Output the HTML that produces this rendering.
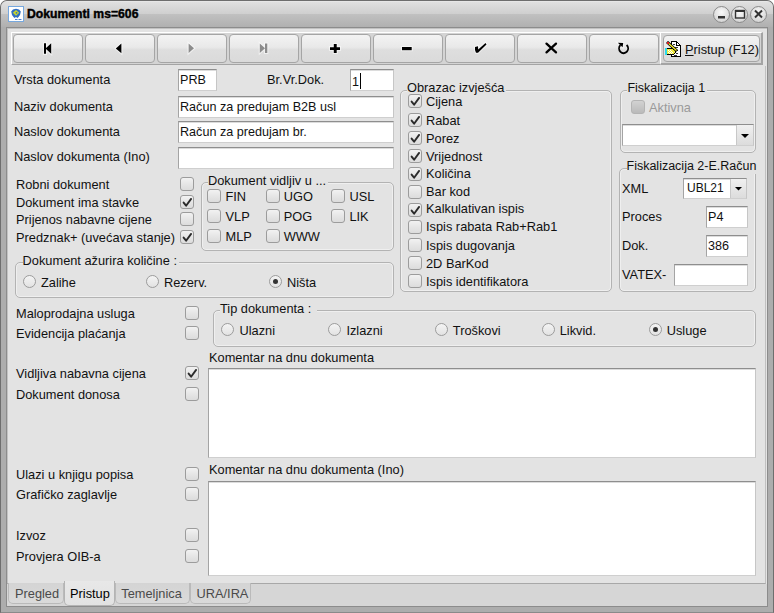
<!DOCTYPE html>
<html><head><meta charset="utf-8"><style>
*{box-sizing:border-box;margin:0;padding:0}
html,body{width:774px;height:613px;overflow:hidden;background:#fff}
body{position:relative;font-family:"Liberation Sans",sans-serif;font-size:12.8px;color:#111}
.win{position:absolute;left:0;top:0;width:774px;height:613px;background:#adadad;border-radius:7px 7px 0 0;border:1px solid #6e6e6e;border-bottom-color:#8a8a8a}
.tbar{position:absolute;left:1px;top:1px;width:772px;height:26px;border-radius:6px 6px 0 0;background:linear-gradient(#eeeeee 0px,#e0e0e0 1px,#cfcfcf 13px,#c1c1c1 13px,#b0b0b0 26px)}
.client{position:absolute;left:6px;top:27px;width:762px;height:580px;background:#e3e3e3;border:1px solid #8c8c8c;box-shadow:inset 1px 1px 0 #c2c2c2}
.t{position:absolute;white-space:nowrap;line-height:15px;font-size:12.8px}
.gt{background:#e3e3e3}
.cb{position:absolute;width:14px;height:14px;border:1px solid #9c9c9c;border-radius:3px;background:linear-gradient(#f2f2f2,#e6e6e6 50%,#dcdcdc)}
.cb svg{position:absolute;left:-1px;top:-1px}
.cb.dis{background:linear-gradient(#d2d2d2,#bababa);border-color:#b4b4b4}
.rb{position:absolute;width:13px;height:13px;border:1px solid #9c9c9c;border-radius:50%;background:linear-gradient(#f4f4f4,#e2e2e2)}
.rb .dot{position:absolute;left:3px;top:3px;width:5px;height:5px;border-radius:50%;background:#333}
.inp{position:absolute;background:#fff;border:1px solid #c6c6c6;border-top-color:#8e8e8e;border-left-color:#a4a4a4;border-bottom-color:#cfcfcf;box-shadow:inset 0 1px 0 #dcdcdc}
.it{position:absolute;white-space:nowrap;line-height:15px;font-size:12.6px}
.grp{position:absolute;border:1px solid #b3b3b3;border-radius:5px;box-shadow:inset 0 0 0 1px #efefef}
.btn{position:absolute;top:34px;height:29px;border:1px solid #a5a5a5;border-radius:4px;background:linear-gradient(#f3f3f3,#e9e9e9 45%,#dedede 55%,#dadada)}
.btn svg{position:absolute;left:0;top:0}
</style></head><body>
<div class="win"></div><div class="tbar"></div><svg style="position:absolute;left:8px;top:6px" width="16" height="16"><rect x="0.5" y="0.5" width="15" height="15" fill="#fff" stroke="#77a8de"/><path d="M5 3.5 L8 2.8 L11 3.5 L12.8 5.5 L12 9 L10.5 11 L9.5 12 L8 11 L6.5 12 L5.5 11 L4 9 L3.2 5.5Z" fill="#2f6ec4"/><path d="M8 4 L11.2 6.8 L8 9.8 L4.8 6.8Z" fill="#c8d62c"/><circle cx="8.5" cy="6.8" r="0.9" fill="#2f6ec4"/><path d="M7 13.5 H9.5 M10.5 13.5 H13.5" stroke="#4a7fd0" stroke-width="1"/></svg><div class="t" style="left:27px;top:7px;font-weight:bold;font-size:12.2px;-webkit-text-stroke:0.4px #000;color:#000">Dokumenti ms=606</div><div style="position:absolute;left:712.5px;top:5.5px;width:17px;height:17px;border-radius:50%;border:1px solid #8a8a8a;background:radial-gradient(circle at 50% 35%,#fafafa,#d8d8d8 70%,#c8c8c8)"></div><div style="position:absolute;left:731.0px;top:5.5px;width:17px;height:17px;border-radius:50%;border:1px solid #8a8a8a;background:radial-gradient(circle at 50% 35%,#fafafa,#d8d8d8 70%,#c8c8c8)"></div><div style="position:absolute;left:750.0px;top:5.5px;width:17px;height:17px;border-radius:50%;border:1px solid #8a8a8a;background:radial-gradient(circle at 50% 35%,#fafafa,#d8d8d8 70%,#c8c8c8)"></div><svg style="position:absolute;left:0;top:0" width="774" height="30"><rect x="718" y="16" width="7" height="2.5" fill="#333"/><rect x="735.5" y="10.5" width="9" height="7.5" fill="none" stroke="#333" stroke-width="1.4"/><rect x="735" y="10" width="10" height="2" fill="#333"/><path d="M755 10.5 L762 17.5 M762 10.5 L755 17.5" stroke="#333" stroke-width="2"/></svg><div class="client"></div><div style="position:absolute;left:11px;top:32px;width:649px;height:33px;background:#d4d4d4;border-top:1px solid #fff;border-left:1px solid #fff;border-bottom:1px solid #a4a4a4"></div><div style="position:absolute;left:660px;top:32px;width:103px;height:33px;background:#d4d4d4;border-top:1px solid #fff;border-left:1px solid #fff;border-right:2px solid #a4a4a4;border-bottom:2px solid #a4a4a4"></div><div class="btn" style="left:13px;width:70px"><svg width="70" height="29" style="left:-1px;top:-1px"><g fill="#fff" stroke="#fff" stroke-width="2.2" opacity="0.55"><path d="M31 9.2 H33 V19.8 H31Z M32.5 14.5 L38.2 9.2 V19.8Z"/></g><g><path d="M31 9.2 H33 V19.8 H31Z M32.5 14.5 L38.2 9.2 V19.8Z"/></g></svg></div><div class="btn" style="left:85px;width:70px"><svg width="70" height="29" style="left:-1px;top:-1px"><g fill="#fff" stroke="#fff" stroke-width="2.2" opacity="0.55"><path d="M30.8 14.4 L36.4 9.6 V19.2Z"/></g><g><path d="M30.8 14.4 L36.4 9.6 V19.2Z"/></g></svg></div><div class="btn" style="left:157px;width:70px"><svg width="70" height="29" style="left:-1px;top:-1px"><g fill="#fff" stroke="#fff" stroke-width="2.2" opacity="0.55"><path d="M31.6 9.5 L37 14.3 L31.6 19Z" fill="#fff"/></g><g><path d="M31.6 9.5 L37 14.3 L31.6 19Z" fill="#8c8c8c"/></g></svg></div><div class="btn" style="left:229px;width:70px"><svg width="70" height="29" style="left:-1px;top:-1px"><g fill="#fff" stroke="#fff" stroke-width="2.2" opacity="0.55"><path d="M30.8 9.5 L36 14.3 L30.8 19Z M36 9.5 H38.3 V19 H36Z" fill="#fff"/></g><g><path d="M30.8 9.5 L36 14.3 L30.8 19Z M36 9.5 H38.3 V19 H36Z" fill="#8c8c8c"/></g></svg></div><div class="btn" style="left:301px;width:70px"><svg width="70" height="29" style="left:-1px;top:-1px"><g fill="#fff" stroke="#fff" stroke-width="2.2" opacity="0.55"><path d="M29 13.2 H39 V16 H29Z M32.8 10 H35.7 V19 H32.8Z"/></g><g><path d="M29 13.2 H39 V16 H29Z M32.8 10 H35.7 V19 H32.8Z"/></g></svg></div><div class="btn" style="left:373px;width:70px"><svg width="70" height="29" style="left:-1px;top:-1px"><g fill="#fff" stroke="#fff" stroke-width="2.2" opacity="0.55"><path d="M29 13 H38.7 V16.2 H29Z"/></g><g><path d="M29 13 H38.7 V16.2 H29Z"/></g></svg></div><div class="btn" style="left:445px;width:70px"><svg width="70" height="29" style="left:-1px;top:-1px"><g fill="#fff" stroke="#fff" stroke-width="2.2" opacity="0.55"><path d="M30 13 L33 12.2 L33.2 15.5 L40.5 9 L41.5 10.5 L33 18.7 L31 18.7 L30 16Z"/></g><g><path d="M30 13 L33 12.2 L33.2 15.5 L40.5 9 L41.5 10.5 L33 18.7 L31 18.7 L30 16Z"/></g></svg></div><div class="btn" style="left:517px;width:70px"><svg width="70" height="29" style="left:-1px;top:-1px"><g fill="#fff" stroke="#fff" stroke-width="2.2" opacity="0.55"><path d="M29.5 9.6 L39 18.4 M39 9.6 L29.5 18.4" fill="none" stroke="#fff" stroke-width="2.3" stroke-linecap="round"/></g><g><path d="M29.5 9.6 L39 18.4 M39 9.6 L29.5 18.4" fill="none" stroke="#000" stroke-width="2.3" stroke-linecap="round"/></g></svg></div><div class="btn" style="left:589px;width:70px"><svg width="70" height="29" style="left:-1px;top:-1px"><g fill="#fff" stroke="#fff" stroke-width="2.2" opacity="0.55"><path d="M31.4 11.2 A4.5 4.7 0 1 0 37.6 11.0" fill="none" stroke="#fff" stroke-width="1.9"/><path d="M28.8 8.8 L34.2 9.0 L33.6 13.2Z"/></g><g><path d="M31.4 11.2 A4.5 4.7 0 1 0 37.6 11.0" fill="none" stroke="#000" stroke-width="1.9"/><path d="M28.8 8.8 L34.2 9.0 L33.6 13.2Z"/></g></svg></div><div class="btn" style="left:663px;width:97px;top:35px;height:27px"></div><svg style="position:absolute;left:665px;top:41px" width="17" height="17" shape-rendering="crispEdges"><path d="M6.5 0.5 H11.5 L15.5 4.5 V15.5 H6.5Z" fill="#fff" stroke="#000"/><path d="M11.5 0.5 V4.5 H15.5" fill="none" stroke="#000"/><path d="M8 3h2M9 6h4M10 9h3M8 12h2M11 12h2M9 14h3" stroke="#333"/><path d="M1.5 7.5 H7.5 L10.5 9.5 V11.5 L8.5 13.5 H1.5Z" fill="#f0ea3a" stroke="#000"/><path d="M3 9h1M5 9h1M4 10h1M6 10h1M3 11h1M5 11h1M7 11h1M4 12h1M6 12h1" stroke="#fff"/><rect x="0" y="7" width="2" height="7" fill="#29d8ee"/><path d="M2 1 L12 10" stroke="#000" stroke-width="3" shape-rendering="auto"/><path d="M2.5 1.5 L11.5 9.5" stroke="#f4ec20" stroke-width="1.4" shape-rendering="auto"/><rect x="2" y="1" width="2" height="2" fill="#e02020"/></svg><div class="t" style="left:685px;top:42px;"><u>P</u>ristup (F12)</div><div class="t" style="left:14px;top:72px;">Vrsta dokumenta</div><div class="t" style="left:14px;top:99px;">Naziv dokumenta</div><div class="t" style="left:14px;top:124px;">Naslov dokumenta</div><div class="t" style="left:14px;top:149px;">Naslov dokumenta (Ino)</div><div class="t" style="left:267px;top:72px;">Br.Vr.Dok.</div><div class="inp" style="left:178px;top:69px;width:39px;height:22px"><span class="it" style="left:1px;top:3.299999999999997px">PRB</span></div><div class="inp" style="left:350px;top:69px;width:44px;height:22px"><span class="it" style="left:1px;top:3.299999999999997px">1<span style="display:inline-block;width:1px;height:16px;background:#000;vertical-align:-3px;margin-left:1px"></span></span></div><div class="inp" style="left:178px;top:96px;width:216px;height:22px"><span class="it" style="left:1px;top:3.200000000000003px">Račun za predujam B2B usl</span></div><div class="inp" style="left:178px;top:121px;width:216px;height:22px"><span class="it" style="left:1px;top:2.6999999999999886px">Račun za predujam br.</span></div><div class="inp" style="left:178px;top:147px;width:216px;height:22px"></div><div class="t" style="left:16px;top:177px;">Robni dokument</div><div class="cb" style="left:180px;top:177px"></div><div class="t" style="left:16px;top:195px;">Dokument ima stavke</div><div class="cb" style="left:180px;top:195px"><svg width="14" height="14" viewBox="0 0 14 14"><path d="M3.6 7.6 L6.1 10.7 L11.1 3.9" fill="none" stroke="#2b2b2b" stroke-width="1.9" stroke-linecap="round" stroke-linejoin="round"/></svg></div><div class="t" style="left:16px;top:212px;">Prijenos nabavne cijene</div><div class="cb" style="left:180px;top:212px"></div><div class="t" style="left:16px;top:230px;">Predznak+ (uvećava stanje)</div><div class="cb" style="left:180px;top:230px"><svg width="14" height="14" viewBox="0 0 14 14"><path d="M3.6 7.6 L6.1 10.7 L11.1 3.9" fill="none" stroke="#2b2b2b" stroke-width="1.9" stroke-linecap="round" stroke-linejoin="round"/></svg></div><div class="grp" style="left:201px;top:182px;width:193px;height:69px"></div><div class="t gt" style="left:208px;top:173px;padding:0 2px 0 0">Dokument vidljiv u ...</div><div class="cb" style="left:207px;top:189px"></div><div class="t" style="left:225.5px;top:189px;">FIN</div><div class="cb" style="left:266px;top:189px"></div><div class="t" style="left:283.7px;top:189px;">UGO</div><div class="cb" style="left:331px;top:189px"></div><div class="t" style="left:349.4px;top:189px;">USL</div><div class="cb" style="left:207px;top:209px"></div><div class="t" style="left:225.5px;top:209px;">VLP</div><div class="cb" style="left:266px;top:209px"></div><div class="t" style="left:283.7px;top:209px;">POG</div><div class="cb" style="left:331px;top:209px"></div><div class="t" style="left:349.4px;top:209px;">LIK</div><div class="cb" style="left:207px;top:229px"></div><div class="t" style="left:225.5px;top:229px;">MLP</div><div class="cb" style="left:266px;top:229px"></div><div class="t" style="left:283.7px;top:229px;">WWW</div><div class="grp" style="left:15px;top:262px;width:379px;height:36px"></div><div class="t gt" style="left:22.6px;top:253px;padding:0 2px 0 0">Dokument ažurira količine :</div><div class="rb" style="left:23px;top:275px"></div><div class="t" style="left:41px;top:275px;">Zalihe</div><div class="rb" style="left:146px;top:275px"></div><div class="t" style="left:164px;top:275px;">Rezerv.</div><div class="rb" style="left:269px;top:275px"><div class="dot"></div></div><div class="t" style="left:287px;top:275px;">Ništa</div><div class="t" style="left:16px;top:306px;">Maloprodajna usluga</div><div class="cb" style="left:185px;top:306px"></div><div class="t" style="left:16px;top:326px;">Evidencija plaćanja</div><div class="cb" style="left:185px;top:326px"></div><div class="t" style="left:16px;top:366px;">Vidljiva nabavna cijena</div><div class="cb" style="left:185px;top:366px"><svg width="14" height="14" viewBox="0 0 14 14"><path d="M3.6 7.6 L6.1 10.7 L11.1 3.9" fill="none" stroke="#2b2b2b" stroke-width="1.9" stroke-linecap="round" stroke-linejoin="round"/></svg></div><div class="t" style="left:16px;top:387px;">Dokument donosa</div><div class="cb" style="left:185px;top:387px"></div><div class="t" style="left:16px;top:467px;">Ulazi u knjigu popisa</div><div class="cb" style="left:185px;top:467px"></div><div class="t" style="left:16px;top:487px;">Grafičko zaglavlje</div><div class="cb" style="left:185px;top:487px"></div><div class="t" style="left:16px;top:528px;">Izvoz</div><div class="cb" style="left:185px;top:528px"></div><div class="t" style="left:16px;top:549px;">Provjera OIB-a</div><div class="cb" style="left:185px;top:549px"></div><div class="grp" style="left:213px;top:310px;width:543px;height:37px"></div><div class="t gt" style="left:220px;top:301px;padding:0 2px 0 0">Tip dokumenta :&nbsp;</div><div class="rb" style="left:221px;top:323px"></div><div class="t" style="left:239.5px;top:323px;">Ulazni</div><div class="rb" style="left:328px;top:323px"></div><div class="t" style="left:346.4px;top:323px;">Izlazni</div><div class="rb" style="left:435px;top:323px"></div><div class="t" style="left:452.8px;top:323px;">Troškovi</div><div class="rb" style="left:542px;top:323px"></div><div class="t" style="left:559.7px;top:323px;">Likvid.</div><div class="rb" style="left:649px;top:323px"><div class="dot"></div></div><div class="t" style="left:666.7px;top:323px;">Usluge</div><div class="t" style="left:209px;top:350px;">Komentar na dnu dokumenta</div><div class="inp" style="left:208px;top:368px;width:548px;height:90px"></div><div class="t" style="left:209px;top:462px;">Komentar na dnu dokumenta (Ino)</div><div class="inp" style="left:208px;top:481px;width:548px;height:95px"></div><div class="grp" style="left:400px;top:90px;width:212px;height:202px"></div><div class="t gt" style="left:407px;top:80px;padding:0 2px 0 0">Obrazac izvješća</div><div class="cb" style="left:408px;top:94px"><svg width="14" height="14" viewBox="0 0 14 14"><path d="M3.6 7.6 L6.1 10.7 L11.1 3.9" fill="none" stroke="#2b2b2b" stroke-width="1.9" stroke-linecap="round" stroke-linejoin="round"/></svg></div><div class="t" style="left:426px;top:94px;">Cijena</div><div class="cb" style="left:408px;top:113px"><svg width="14" height="14" viewBox="0 0 14 14"><path d="M3.6 7.6 L6.1 10.7 L11.1 3.9" fill="none" stroke="#2b2b2b" stroke-width="1.9" stroke-linecap="round" stroke-linejoin="round"/></svg></div><div class="t" style="left:426px;top:113px;">Rabat</div><div class="cb" style="left:408px;top:131px"><svg width="14" height="14" viewBox="0 0 14 14"><path d="M3.6 7.6 L6.1 10.7 L11.1 3.9" fill="none" stroke="#2b2b2b" stroke-width="1.9" stroke-linecap="round" stroke-linejoin="round"/></svg></div><div class="t" style="left:426px;top:131px;">Porez</div><div class="cb" style="left:408px;top:149px"><svg width="14" height="14" viewBox="0 0 14 14"><path d="M3.6 7.6 L6.1 10.7 L11.1 3.9" fill="none" stroke="#2b2b2b" stroke-width="1.9" stroke-linecap="round" stroke-linejoin="round"/></svg></div><div class="t" style="left:426px;top:149px;">Vrijednost</div><div class="cb" style="left:408px;top:167px"><svg width="14" height="14" viewBox="0 0 14 14"><path d="M3.6 7.6 L6.1 10.7 L11.1 3.9" fill="none" stroke="#2b2b2b" stroke-width="1.9" stroke-linecap="round" stroke-linejoin="round"/></svg></div><div class="t" style="left:426px;top:166px;">Količina</div><div class="cb" style="left:408px;top:185px"></div><div class="t" style="left:426px;top:184px;">Bar kod</div><div class="cb" style="left:408px;top:203px"><svg width="14" height="14" viewBox="0 0 14 14"><path d="M3.6 7.6 L6.1 10.7 L11.1 3.9" fill="none" stroke="#2b2b2b" stroke-width="1.9" stroke-linecap="round" stroke-linejoin="round"/></svg></div><div class="t" style="left:426px;top:201px;">Kalkulativan ispis</div><div class="cb" style="left:408px;top:220px"></div><div class="t" style="left:426px;top:219px;">Ispis rabata Rab+Rab1</div><div class="cb" style="left:408px;top:238px"></div><div class="t" style="left:426px;top:238px;">Ispis dugovanja</div><div class="cb" style="left:408px;top:256px"></div><div class="t" style="left:426px;top:256px;">2D BarKod</div><div class="cb" style="left:408px;top:274px"></div><div class="t" style="left:426px;top:274px;">Ispis identifikatora</div><div class="grp" style="left:620px;top:90px;width:136px;height:63px"></div><div class="t gt" style="left:627.4px;top:80px;padding:0 2px 0 0"><span style="font-size:12.5px">Fiskalizacija 1</span></div><div class="cb dis" style="left:631px;top:100px"></div><div class="t" style="left:649px;top:100px;color:#9a9a9a">Aktivna</div><div class="inp" style="left:622px;top:124px;width:132px;height:22px"><div style="position:absolute;right:0;top:0;width:17px;height:20px;background:linear-gradient(#f0f0f0,#dcdcdc);border-left:1px solid #c8c8c8"><svg width="16" height="20"><path d="M4 9 L12 9 L8 13Z" fill="#000"/></svg></div></div><div class="grp" style="left:619px;top:168px;width:137px;height:124px"></div><div class="t gt" style="left:626.5px;top:158px;padding:0 2px 0 0"><span style="font-size:12.5px">Fiskalizacija 2-E.Račun</span></div><div class="t" style="left:622px;top:181px;">XML</div><div class="inp" style="left:683px;top:178px;width:64px;height:21px"><span class="it" style="left:3px;top:2px;font-size:12px">UBL21</span><div style="position:absolute;right:0;top:0;width:16px;height:19px;background:linear-gradient(#f0f0f0,#dcdcdc);border-left:1px solid #c8c8c8"><svg width="16" height="19"><path d="M4 8 L11 8 L7.5 11.5Z" fill="#000"/></svg></div></div><div class="t" style="left:622px;top:209px;">Proces</div><div class="inp" style="left:706px;top:206px;width:42px;height:22px"><span class="it" style="left:1px;top:2.5px">P4</span></div><div class="t" style="left:622px;top:238px;">Dok.</div><div class="inp" style="left:706px;top:235px;width:42px;height:22px"><span class="it" style="left:1px;top:2.5px">386</span></div><div class="t" style="left:622px;top:267px;">VATEX-</div><div class="inp" style="left:674px;top:264px;width:74px;height:22px"></div><div style="position:absolute;left:7px;top:66px;width:759px;height:518px;border-right:1px solid #c0c0c0;border-bottom:1px solid #a8a8a8"></div><div style="position:absolute;left:7px;top:584px;width:760px;height:22px;background:#d6d6d6"></div><div style="position:absolute;left:8px;top:583px;width:56px;height:21px;background:linear-gradient(#d4d4d4,#dadada);border:1px solid #bababa;border-top:none;border-radius:0 0 5px 5px"></div><div class="t" style="left:15px;top:586px;color:#4a4a4a">Pregled</div><div style="position:absolute;left:64px;top:581px;width:51px;height:25px;background:linear-gradient(#e8e8e8,#e2e2e2);border:1px solid #b4b4b4;border-top:none;border-radius:0 0 5px 5px"></div><div class="t" style="left:70px;top:586px;color:#000">Pristup</div><div style="position:absolute;left:115px;top:583px;width:75px;height:21px;background:linear-gradient(#d4d4d4,#dadada);border:1px solid #bababa;border-top:none;border-radius:0 0 5px 5px"></div><div class="t" style="left:121.3px;top:586px;color:#4a4a4a">Temeljnica</div><div style="position:absolute;left:190px;top:583px;width:61px;height:21px;background:linear-gradient(#d4d4d4,#dadada);border:1px solid #bababa;border-top:none;border-radius:0 0 5px 5px"></div><div class="t" style="left:196.5px;top:586px;color:#4a4a4a">URA/IRA</div>
</body></html>
